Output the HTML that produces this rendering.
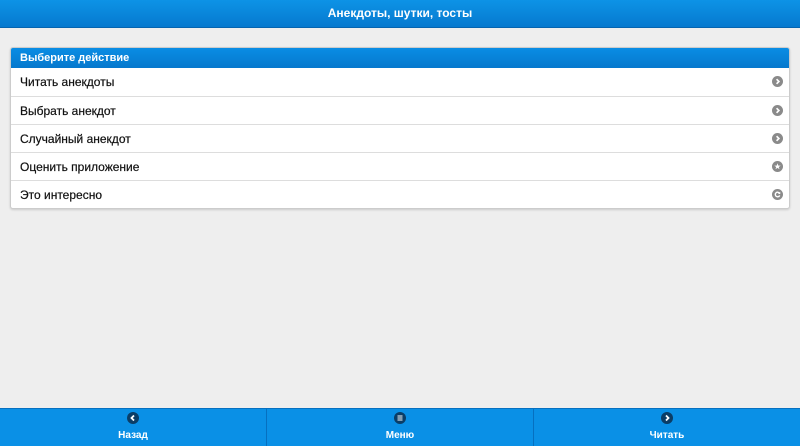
<!DOCTYPE html>
<html><head><meta charset="utf-8"><style>
*{margin:0;padding:0;box-sizing:border-box}
body{width:800px;height:446px;background:#eeeeee;font-family:"Liberation Sans",sans-serif;position:relative;overflow:hidden}
.hdr{position:absolute;left:0;top:0;width:800px;height:28px;background:linear-gradient(#0d93e6,#0679cf);border-bottom:1px solid #0564b0;color:#fff;font-size:12px;font-weight:bold;text-align:center;line-height:27px}
.card{position:absolute;left:10px;top:47px;width:780px;background:#fff;border:1px solid #ccc;border-radius:3px;box-shadow:0 1px 2px rgba(0,0,0,.15);overflow:hidden}
.ch{height:20px;background:linear-gradient(#0a8de4,#0678cd);color:#fff;font-size:11px;font-weight:bold;line-height:20px;padding-left:9px}
.row{height:28px;border-top:1px solid #ddd;font-size:12px;color:#111;line-height:28px;padding-left:9px;position:relative;-webkit-text-stroke:0.2px #111}
.ic{position:absolute;right:6px;top:8px;width:11px;height:11px}
.ftr{position:absolute;left:0;top:408px;width:800px;height:38px;background:#0a90e6;border-top:1px solid #0670c0;display:flex}
.ftr div{flex:1;border-left:1px solid #0670c0;color:#fff;font-size:10px;font-weight:bold;text-align:center;position:relative}
.ftr div:first-child{border-left:none}
.fi{position:absolute;left:50%;top:3px;margin-left:-6px;width:12px;height:12px}
.ft{position:absolute;left:0;right:0;top:21px}
</style></head><body>
<div class="hdr">Анекдоты, шутки, тосты</div>
<div class="card">
<div class="ch">Выберите действие</div>
<div class="row" style="border-top:none">Читать анекдоты<svg class="ic" viewBox="0 0 12 12"><circle cx="6" cy="6" r="6" fill="#8a8a8a"/><path d="M5 3.5L7.5 6L5 8.5" stroke="#fff" stroke-width="1.8" fill="none"/></svg></div>
<div class="row">Выбрать анекдот<svg class="ic" viewBox="0 0 12 12"><circle cx="6" cy="6" r="6" fill="#8a8a8a"/><path d="M5 3.5L7.5 6L5 8.5" stroke="#fff" stroke-width="1.8" fill="none"/></svg></div>
<div class="row">Случайный анекдот<svg class="ic" viewBox="0 0 12 12"><circle cx="6" cy="6" r="6" fill="#8a8a8a"/><path d="M5 3.5L7.5 6L5 8.5" stroke="#fff" stroke-width="1.8" fill="none"/></svg></div>
<div class="row">Оценить приложение<svg class="ic" viewBox="0 0 12 12"><circle cx="6" cy="6" r="6" fill="#8a8a8a"/><path d="M6 2.5L6.9 5H9.5L7.4 6.5L8.2 9L6 7.5L3.8 9L4.6 6.5L2.5 5H5.1Z" fill="#fff"/></svg></div>
<div class="row">Это интересно<svg class="ic" viewBox="0 0 12 12"><circle cx="6" cy="6" r="6" fill="#8a8a8a"/><path d="M8.3 4.8A2.5 2.5 0 1 0 8.4 7" stroke="#fff" stroke-width="1.5" fill="none"/><path d="M9 3V5.5H6.5Z" fill="#fff"/></svg></div>
</div>
<div class="ftr">
<div><svg class="fi" viewBox="0 0 12 12"><circle cx="6" cy="6" r="6" fill="#0b3d66"/><path d="M7 3.5L4.5 6L7 8.5" stroke="#fff" stroke-width="1.8" fill="none"/></svg><span class="ft">Назад</span></div>
<div><svg class="fi" viewBox="0 0 12 12"><circle cx="6" cy="6" r="6" fill="#0b3d66"/><path d="M3.5 4H8.5M3.5 6H8.5M3.5 8H8.5" stroke="#fff" stroke-width="1.1"/></svg><span class="ft">Меню</span></div>
<div><svg class="fi" viewBox="0 0 12 12"><circle cx="6" cy="6" r="6" fill="#0b3d66"/><path d="M5 3.5L7.5 6L5 8.5" stroke="#fff" stroke-width="1.8" fill="none"/></svg><span class="ft">Читать</span></div>
</div>
</body></html>
